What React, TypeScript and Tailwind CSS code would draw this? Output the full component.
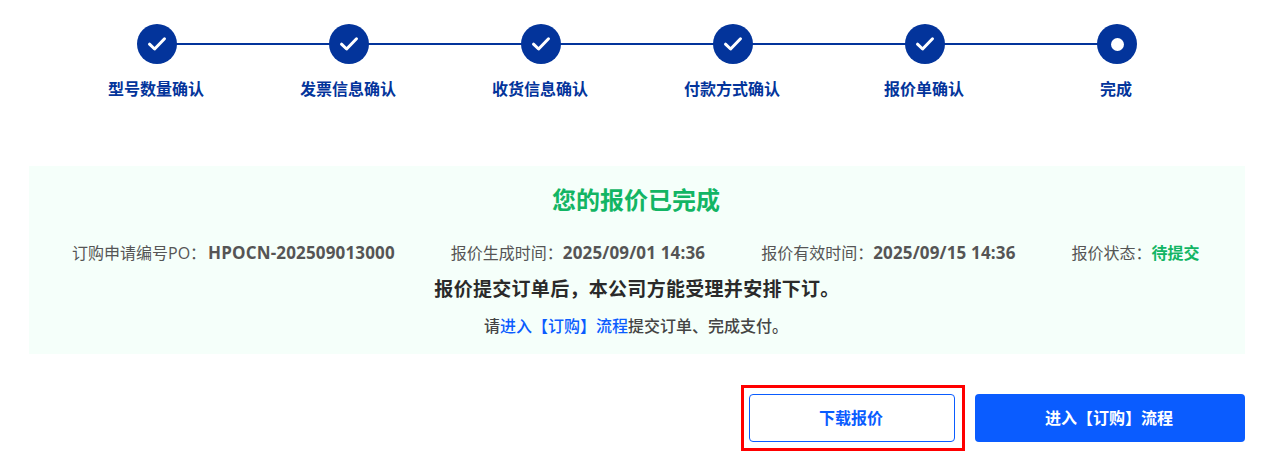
import React from "react";

const FONT = '"Open Sans", "Noto Sans CJK SC", sans-serif';

const steps = ["型号数量确认", "发票信息确认", "收货信息确认", "付款方式确认", "报价单确认", "完成"];

const Check = () => (
  <svg width="20" height="16" viewBox="0 0 20 16" fill="none">
    <path d="M2.5 8.2L7.6 13L17.5 2.8" stroke="white" strokeWidth="3" strokeLinecap="round" strokeLinejoin="round" />
  </svg>
);

const Stepper = () => (
  <div className="flex px-[61px] pt-6">
    {steps.map((label, i) => (
      <div key={label} className="relative flex w-[192px] flex-col items-center">
        {i < steps.length - 1 && <div className="absolute left-[96px] top-[19px] h-[2px] w-[192px] bg-[#03349b]" />}
        <div className="relative flex h-10 w-10 items-center justify-center rounded-full bg-[#03349b]">
          {i < steps.length - 1 ? <Check /> : <div className="h-[13px] w-[13px] rounded-full bg-white" />}
        </div>
        <div className="mt-[14px] pr-[2px] text-[16px] leading-[22px] font-bold text-[#03349b]">{label}</div>
      </div>
    ))}
  </div>
);

const Field = ({ label, value, green }: { label: string; value: string; green?: boolean }) => (
  <div className="text-[16px] whitespace-nowrap text-[#555555]">
    {label}
    <span className={green ? "font-bold text-[#12b564]" : "text-[17px] font-bold tracking-[0.15px]"}>{value}</span>
  </div>
);

const App = () => {
  return (
    <div className="h-[468px] w-[1280px] overflow-hidden bg-white" style={{ fontFamily: FONT }}>
      <Stepper />
      <div className="mx-[29px] mt-[66px] h-[188px] w-[1216px] bg-[#f5fffa] pt-[18px] text-center">
        <h1 className="pr-[2px] text-[24px] leading-[32px] font-bold text-[#12b564]">您的报价已完成</h1>
        <div className="mt-[25px] flex h-6 items-center gap-14 pl-[43px]">
          <div className="flex">
            <Field label="订购申请编号PO：" value="" />
            <span className="ml-[2px] text-[17px] font-bold tracking-[0.15px] text-[#555555]">HPOCN-202509013000</span>
          </div>
          <Field label="报价生成时间：" value="2025/09/01 14:36" />
          <Field label="报价有效时间：" value="2025/09/15 14:36" />
          <Field label="报价状态：" value="待提交" green />
        </div>
        <p className="mt-[12px] text-[19px] leading-[24px] font-bold tracking-[0.3px] text-[#2a2a2a]">
          报价提交订单后，本公司方能受理并安排下订。
        </p>
        <p className="mt-[13px] pr-[2px] text-[16px] leading-[24px] font-medium text-[#444444]">
          请<span className="text-[#0a5cff]">进入【订购】流程</span>提交订单、完成支付。
        </p>
      </div>
      <div className="mt-[31px] flex items-center justify-end pr-[35px]">
        <div className="border-[3px] border-[#ff0000] pt-[6px] pr-[7px] pb-[6px] pl-[5px]">
          <button className="block h-12 w-[206px] rounded-[4px] border border-[#0a5cff] bg-white pr-[2px] text-[16px] font-bold text-[#0a5cff]">
            下载报价
          </button>
        </div>
        <button className="ml-[10px] h-12 w-[270px] rounded-[4px] bg-[#0a5cff] pr-[2px] text-[16px] font-bold text-white">
          进入【订购】流程
        </button>
      </div>
    </div>
  );
};

export default App;
